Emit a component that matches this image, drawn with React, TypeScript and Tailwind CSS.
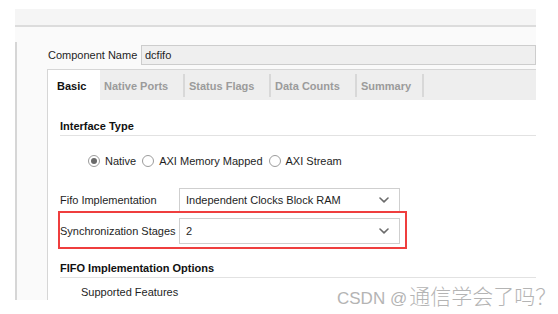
import React from "react";

function Chevron() {
  return (
    <svg width="10" height="6" viewBox="0 0 10 6" fill="none">
      <path d="M1 1L5 4.8L9 1" stroke="#6b6b6b" strokeWidth="1.6" strokeLinecap="round" strokeLinejoin="round" />
    </svg>
  );
}

function Radio({ checked, label }: { checked?: boolean; label: string }) {
  return (
    <div className="flex items-center">
      <span className="flex h-[12px] w-[12px] items-center justify-center rounded-full border border-[#9c9c9c] bg-white">
        {checked && <span className="h-[6px] w-[6px] rounded-full bg-[#6a6a6a]" />}
      </span>
      <span className="ml-[5px] mr-[6px] text-[#1e1e1e]">{label}</span>
    </div>
  );
}

function Select({ value, h }: { value: string; h: string }) {
  return (
    <div
      className={`flex w-[221px] items-center justify-between border border-[#cfcfcf] bg-white pl-[6px] pr-[10px] text-[#1e1e1e] ${h}`}
    >
      <span>{value}</span>
      <Chevron />
    </div>
  );
}

const TABS = [
  { label: "Native Ports", w: "w-[85px]" },
  { label: "Status Flags", w: "w-[86px]" },
  { label: "Data Counts", w: "w-[86px]" },
  { label: "Summary", w: "w-[67px]" },
];

export default function App() {
  return (
    <div className="relative h-[314px] w-[558px] overflow-hidden bg-white pl-[15px] pr-[22px] pt-[9px] font-['Liberation_Sans',Arial,sans-serif] text-[11px]">
      {/* header strip */}
      <div className="h-[18px] border-b-2 border-[#dcdcdc] bg-[#f5f5f5]" />

      <div className="flex h-[273px] overflow-hidden bg-[#fafafa]">
        <div className="mt-[15px] w-[2px] bg-[#d6d6d6]" />

        <div className="ml-[30px] flex flex-1 flex-col">
          {/* component name */}
          <div className="mt-[17px] flex h-[24px] items-center pt-[1px]">
            <span className="w-[94px] pl-[1px] text-[#1e1e1e]">Component Name</span>
            <div className="flex h-full flex-1 items-center border border-[#cdcdcd] bg-[#efefef] pl-[3px] text-[#1e1e1e]">
              dcfifo
            </div>
          </div>

          {/* tab panel */}
          <div className="mt-[4px] flex flex-1 flex-col border-l border-t border-[#d6d6d6] bg-white">
            <div className="flex h-[30px] items-center bg-[#eeeeee] font-bold text-[#9b9b9b]">
              <div className="flex h-full w-[52px] items-center bg-white pl-[9px] pt-[2px] text-[#111]">Basic</div>
              {TABS.map((t) => (
                <div key={t.label} className={`flex h-full items-center ${t.w}`}>
                  <span className="flex-1 pl-[4px] pt-[2px]">{t.label}</span>
                  <span className="h-[23px] w-[2px] bg-[#d8d8d8]" />
                </div>
              ))}
            </div>

            <div className="flex flex-col pl-[12px]">
              <div className="mt-[18px] h-[18px] border-b border-[#e2e2e2] font-bold leading-[16px] text-[#111]">
                Interface Type
              </div>

              <div className="ml-[28px] mt-[18px] flex h-[14px] items-center">
                <Radio checked label="Native" />
                <Radio label="AXI Memory Mapped" />
                <Radio label="AXI Stream" />
              </div>

              <div className="mt-[20px] flex h-[24px] items-center">
                <span className="w-[119px] text-[#1e1e1e]">Fifo Implementation</span>
                <Select value="Independent Clocks Block RAM" h="h-[24px]" />
              </div>

              <div className="-ml-[2px] -mt-[1px] flex h-[38px] w-[349px] items-center border-2 border-[#ef3e3e] pt-[2px]">
                <span className="w-[119px] text-[#1e1e1e]">Synchronization Stages</span>
                <Select value="2" h="h-[26px]" />
              </div>

              <div className="mt-[11px] h-[18px] border-b border-[#e2e2e2] font-bold leading-[16px] text-[#111]">
                FIFO Implementation Options
              </div>

              <div className="mt-[6px] pl-[21px] leading-[16px] text-[#1e1e1e]">Supported Features</div>
            </div>
          </div>
        </div>
      </div>

      {/* watermark */}
      <div className="absolute left-[337px] top-[281px] flex items-baseline font-['Liberation_Sans',sans-serif] text-[17px] leading-[28px] text-[#b4b4b4]">
        <span>CSDN @</span>
        <span className="ml-[2px] font-['Noto_Sans_CJK_SC',sans-serif] text-[21px] font-light">通信学会了吗？</span>
      </div>
    </div>
  );
}
